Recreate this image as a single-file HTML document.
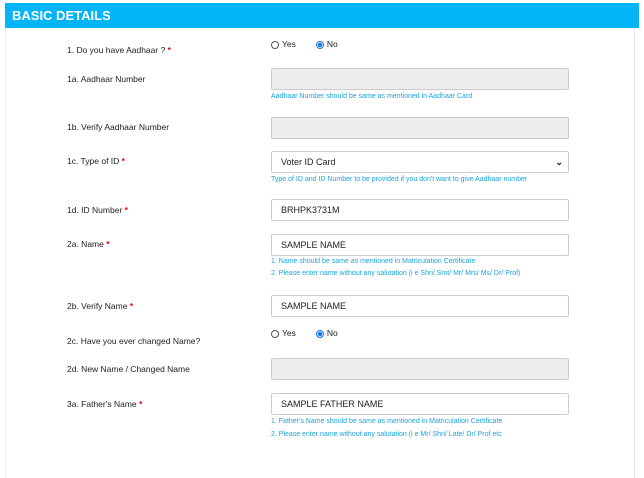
<!DOCTYPE html>
<html><head><style>
body{margin:0;width:644px;height:471px;background:#fff;font-family:"Liberation Sans",Arial,sans-serif;position:relative;overflow:hidden}
.hdr{position:absolute;left:5px;top:3px;width:634px;height:25px;background:#03b4f7;color:#fff;font-size:13px;font-weight:bold;line-height:25px;padding-left:7px;box-sizing:border-box}
.panel{position:absolute;left:5px;top:28px;width:628px;height:450px;border-right:1px solid #e6e6e6;border-left:1px solid #eee}
.l{position:absolute;left:67px;font-size:8.5px;color:#222}
.l b{color:#e00;font-weight:bold}
.i{position:absolute;left:271px;width:298px;height:22px;border:1px solid #ccc;box-sizing:border-box;border-radius:2px;font-size:9px;color:#222;line-height:20px;padding-left:9px;background:#fff}
.d{background:#ededed}
.h{position:absolute;left:271px;font-size:7px;color:#1ca3dc}
.r{position:absolute;left:271px;font-size:8.5px;color:#222}
.c{display:inline-block;width:8px;height:8px;border:1px solid #555;border-radius:50%;vertical-align:-2px;margin-right:3px;box-sizing:border-box}
.c.on{border-color:#1a73e8;background:radial-gradient(circle,#1a73e8 2px,#fff 2.5px)}
</style></head><body>
<div class="hdr">BASIC DETAILS</div>
<div class="panel"></div>
<div class="l" style="top:45px">1. Do you have Aadhaar ? <b>*</b></div>
<div class="r" style="top:39px"><span class="c"></span>Yes<span style="display:inline-block;width:20px"></span><span class="c on"></span>No</div>
<div class="l" style="top:74px">1a. Aadhaar Number</div>
<div class="i d" style="top:68px"></div>
<div class="h" style="top:93px">Aadhaar Number should be same as mentioned in Aadhaar Card</div>
<div class="l" style="top:122px">1b. Verify Aadhaar Number</div>
<div class="i d" style="top:117px"></div>
<div class="l" style="top:156px">1c. Type of ID <b>*</b></div>
<div class="i" style="top:151px">Voter ID Card<span style="position:absolute;right:5px;top:0;font-size:9px;font-weight:bold">&#8964;</span></div>
<div class="h" style="top:176px">Type of ID and ID Number to be provided if you don't want to give Aadhaar number</div>
<div class="l" style="top:205px">1d. ID Number <b>*</b></div>
<div class="i" style="top:199px">BRHPK3731M</div>
<div class="l" style="top:239px">2a. Name <b>*</b></div>
<div class="i" style="top:234px">SAMPLE NAME</div>
<div class="h" style="top:258px">1. Name should be same as mentioned in Matriculation Certificate</div>
<div class="h" style="top:270px">2. Please enter name without any salutation (i e Shri/ Smt/ Mr/ Mrs/ Ms/ Dr/ Prof)</div>
<div class="l" style="top:301px">2b. Verify Name <b>*</b></div>
<div class="i" style="top:295px">SAMPLE NAME</div>
<div class="l" style="top:336px">2c. Have you ever changed Name?</div>
<div class="r" style="top:328px"><span class="c"></span>Yes<span style="display:inline-block;width:20px"></span><span class="c on"></span>No</div>
<div class="l" style="top:364px">2d. New Name / Changed Name</div>
<div class="i d" style="top:358px"></div>
<div class="l" style="top:399px">3a. Father's Name <b>*</b></div>
<div class="i" style="top:393px">SAMPLE FATHER NAME</div>
<div class="h" style="top:418px">1. Father's Name should be same as mentioned in Matriculation Certificate</div>
<div class="h" style="top:431px">2. Please enter name without any salutation (i e Mr/ Shri/ Late/ Dr/ Prof etc</div>
</body></html>
